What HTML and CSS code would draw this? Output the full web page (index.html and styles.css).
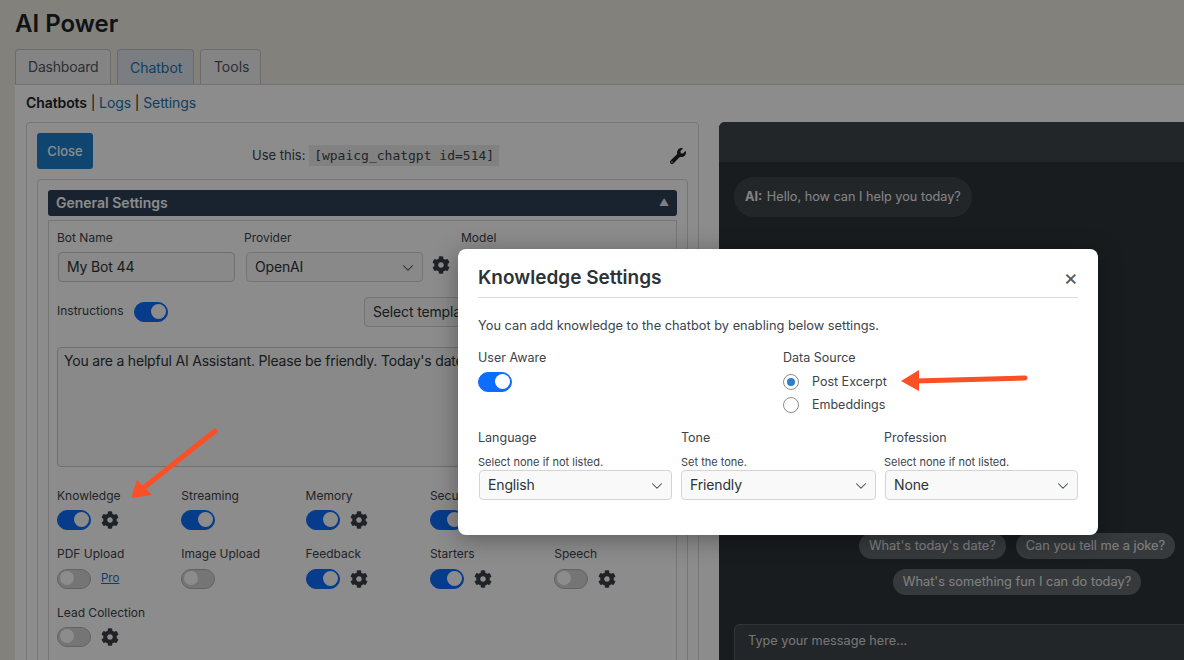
FILE: index.html
```html
<!DOCTYPE html>
<html lang="en">
<head>
<meta charset="utf-8">
<title>AI Power</title>
<link rel="stylesheet" href="styles.css">
</head>
<body>
<svg class="defs" width="0" height="0" aria-hidden="true">
  <symbol id="gear" viewBox="0 0 512 512"><path d="M487.4 315.7l-42.6-24.6c4.3-23.2 4.3-47 0-70.2l42.6-24.6c4.9-2.8 7.1-8.6 5.5-14-11.1-35.6-30-67.8-54.7-94.6-3.8-4.1-10-5.1-14.8-2.3L380.8 110c-17.9-15.4-38.5-27.3-60.8-35.1V25.8c0-5.6-3.9-10.5-9.4-11.7-36.7-8.2-74.3-7.8-109.2 0-5.5 1.2-9.4 6.1-9.4 11.7V75c-22.2 7.9-42.8 19.8-60.8 35.1L88.7 85.5c-4.9-2.8-11-1.9-14.8 2.3-24.7 26.7-43.6 58.9-54.7 94.6-1.7 5.4.6 11.2 5.5 14L67.3 221c-4.3 23.2-4.3 47 0 70.2l-42.6 24.6c-4.9 2.8-7.1 8.6-5.5 14 11.1 35.6 30 67.8 54.7 94.6 3.8 4.1 10 5.1 14.8 2.3l42.6-24.6c17.9 15.4 38.5 27.3 60.8 35.1v49.2c0 5.6 3.9 10.5 9.4 11.7 36.7 8.2 74.3 7.8 109.2 0 5.5-1.2 9.4-6.1 9.4-11.7v-49.2c22.2-7.9 42.8-19.8 60.8-35.1l42.6 24.6c4.9 2.8 11 1.9 14.8-2.3 24.7-26.7 43.6-58.9 54.7-94.6 1.5-5.5-.7-11.3-5.6-14.1zM256 336c-44.1 0-80-35.9-80-80s35.9-80 80-80 80 35.9 80 80-35.9 80-80 80z"/></symbol>
  <symbol id="chev" viewBox="0 0 16 16"><path d="M2 5l6 6 6-6" fill="none" stroke="currentColor" stroke-width="1.4" stroke-linecap="round" stroke-linejoin="round"/></symbol>
</svg>

<div class="page">
  <h1 class="title">AI Power</h1>
  <nav class="tabs">
    <a class="tab">Dashboard</a>
    <a class="tab tab-active">Chatbot</a>
    <a class="tab tab-tools">Tools</a>
  </nav>
  <div class="panel">
    <p class="subnav"><b>Chatbots</b> | <a class="link">Logs</a> | <a class="link">Settings</a></p>
    <div class="columns">
      <section class="card">
        <div class="card-top">
          <button class="btn-close">Close</button>
          <div class="use-this">Use this: <code class="shortcode">[wpaicg_chatgpt id=514]</code></div>
          <svg class="wrench" viewBox="0 0 512 512"><path d="M507.73 109.1c-2.24-9.03-13.54-12.09-20.12-5.51l-74.36 74.36-67.88-11.31-11.31-67.88 74.36-74.36c6.62-6.62 3.43-17.9-5.66-20.16-47.38-11.74-99.55.91-136.58 37.93-39.64 39.64-50.55 97.1-34.05 147.2L18.74 402.76c-24.99 24.99-24.99 65.51 0 90.5 24.99 24.99 65.51 24.99 90.5 0l213.21-213.21c50.12 16.71 107.47 5.68 147.37-34.22 37.07-37.07 49.7-89.32 37.91-136.73zM64 472c-13.25 0-24-10.75-24-24 0-13.26 10.75-24 24-24s24 10.74 24 24c0 13.25-10.75 24-24 24z"/></svg>
        </div>
        <div class="inner">
          <div class="section-bar"><span>General Settings</span><span class="caret">▲</span></div>
          <div class="section-body">
            <div class="row-main">
              <div class="field f-name"><label class="lbl">Bot Name</label><input class="control" value="My Bot 44"></div>
              <div class="field f-provider"><label class="lbl">Provider</label>
                <div class="with-gear"><div class="fake-select"><span>OpenAI</span><svg class="chev"><use href="#chev"/></svg></div><svg class="gear"><use href="#gear"/></svg></div>
              </div>
              <div class="field f-model"><label class="lbl">Model</label><div class="fake-select"></div></div>
            </div>
            <div class="row-instr">
              <span class="instr-label">Instructions</span>
              <span class="toggle on"></span>
              <div class="fake-select template"><span>Select template</span></div>
            </div>
            <div class="textarea">You are a helpful AI Assistant. Please be friendly. Today's date</div>
            <div class="opts">
              <div class="opt"><span class="opt-l">Knowledge</span><div class="opt-c"><span class="toggle on"></span><svg class="gear"><use href="#gear"/></svg></div></div>
              <div class="opt"><span class="opt-l">Streaming</span><div class="opt-c"><span class="toggle on"></span></div></div>
              <div class="opt"><span class="opt-l">Memory</span><div class="opt-c"><span class="toggle on"></span><svg class="gear"><use href="#gear"/></svg></div></div>
              <div class="opt"><span class="opt-l">Security</span><div class="opt-c"><span class="toggle on"></span><svg class="gear"><use href="#gear"/></svg></div></div>
              <div class="opt"></div>
              <div class="opt"><span class="opt-l">PDF Upload</span><div class="opt-c"><span class="toggle"></span><a class="pro">Pro</a></div></div>
              <div class="opt"><span class="opt-l">Image Upload</span><div class="opt-c"><span class="toggle"></span></div></div>
              <div class="opt"><span class="opt-l">Feedback</span><div class="opt-c"><span class="toggle on"></span><svg class="gear"><use href="#gear"/></svg></div></div>
              <div class="opt"><span class="opt-l">Starters</span><div class="opt-c"><span class="toggle on"></span><svg class="gear"><use href="#gear"/></svg></div></div>
              <div class="opt"><span class="opt-l">Speech</span><div class="opt-c"><span class="toggle"></span><svg class="gear"><use href="#gear"/></svg></div></div>
              <div class="opt"><span class="opt-l">Lead Collection</span><div class="opt-c"><span class="toggle"></span><svg class="gear"><use href="#gear"/></svg></div></div>
            </div>
          </div>
        </div>
      </section>
      <section class="chat">
        <div class="chat-head"></div>
        <div class="chat-body">
          <div class="bubble"><b>AI:</b> Hello, how can I help you today?</div>
          <div class="chips">
            <span class="chip">What's today's date?</span>
            <span class="chip">Can you tell me a joke?</span>
            <span class="chip">What's something fun I can do today?</span>
          </div>
          <div class="chat-input">Type your message here...</div>
        </div>
      </section>
    </div>
  </div>
</div>

<div class="backdrop"></div>

<div class="modal">
  <header class="modal-head"><h2 class="modal-title">Knowledge Settings</h2><span class="modal-x">×</span></header>
  <p class="modal-intro">You can add knowledge to the chatbot by enabling below settings.</p>
  <div class="modal-row">
    <div class="aware">
      <div class="m-label">User Aware</div>
      <span class="toggle toggle-bright on"></span>
    </div>
    <div class="source">
      <div class="m-label">Data Source</div>
      <div class="radio-line radio-first"><span class="radio checked"></span>Post Excerpt</div>
      <div class="radio-line"><span class="radio"></span>Embeddings</div>
    </div>
  </div>
  <div class="modal-selects">
    <div class="m-field">
      <div class="m-label">Language</div>
      <div class="m-hint">Select none if not listed.</div>
      <div class="fake-select m-select"><span>English</span><svg class="chev"><use href="#chev"/></svg></div>
    </div>
    <div class="m-field">
      <div class="m-label">Tone</div>
      <div class="m-hint">Set the tone.</div>
      <div class="fake-select m-select"><span>Friendly</span><svg class="chev"><use href="#chev"/></svg></div>
    </div>
    <div class="m-field">
      <div class="m-label">Profession</div>
      <div class="m-hint">Select none if not listed.</div>
      <div class="fake-select m-select"><span>None</span><svg class="chev"><use href="#chev"/></svg></div>
    </div>
  </div>
</div>

<svg class="arrows" viewBox="0 0 1184 660" aria-hidden="true">
  <path class="arrow-shaft" d="M215 431L142 489"/>
  <path class="arrow-head" d="M131 498L137 480L152 495Z"/>
  <path class="arrow-shaft" d="M1025 378L915 381"/>
  <path class="arrow-head" d="M901 381L919 370L919 391Z"/>
</svg>
</body>
</html>
```

FILE: styles.css
```css
* { box-sizing: border-box; }
html, body { margin: 0; height: 660px; overflow: hidden; }
body {
  background: #eeece2;
  color: #1d2327;
  font: 13px/1.4 Inter, "Noto Sans", "Liberation Sans", sans-serif;
  position: relative;
}
.defs { position: absolute; }
.page { width: 1340px; padding: 0 0 0 15px; }
.title { margin: 0; padding-top: 9px; height: 49px; font-size: 24px; line-height: 29px; font-weight: 600; color: #1d2327; }

.tabs { display: flex; gap: 6px; height: 35px; }
.tab {
  height: 35px; padding: 0 11.5px 0 12px; display: flex; align-items: center;
  font-size: 14px; letter-spacing: -0.2px; color: #50575e; background: #f0f0f1;
  border: 1px solid #c3c4c7; border-bottom: 0; border-radius: 4px 4px 0 0;
}
.tab-active { width: 77px; letter-spacing: 0; background: #dfe5ee; color: #2271b1; padding-top: 2px; }
.tab-tools { width: 61px; padding-left: 13px; letter-spacing: 0; }

.panel { background: #fff; border-top: 1px solid #d4d4d4; padding: 0 11px; height: 640px; }
.subnav { margin: 0; height: 37px; padding-top: 9px; font-size: 14px; line-height: 18px; letter-spacing: -0.1px; color: #1d2327; }
.subnav b { font-weight: 600; }
.link { color: #2271b1; }

.columns { display: grid; grid-template-columns: 673px 596px; gap: 20px; }
.card { height: 600px; background: #fff; border: 1px solid #d8d8d8; border-radius: 4px; padding: 10px; }
.card-top { display: flex; align-items: center; height: 36px; position: relative; }
.btn-close {
  width: 56px; height: 36px; padding: 0; background: #1d7ec9; color: #fff;
  font: 500 13px Inter, sans-serif; border: 0; border-radius: 3px;
}
.use-this { margin-left: 159px; margin-top: 8px; font-size: 13px; color: #3c434a; }
.shortcode {
  display: inline-block; margin-left: 0; padding: 0 5px; height: 21px;
  background: #ebebeb; color: #3c434a; font: 13px/21px "DejaVu Sans Mono", monospace;
}
.wrench { position: absolute; right: 2px; top: 15px; width: 16px; height: 16px; fill: #1d2327; }

.inner { margin-top: 10px; height: 560px; border: 1px solid #d8d8d8; border-radius: 4px; padding: 10px; }
.section-bar {
  height: 26px; padding: 0 8px; display: flex; align-items: center; justify-content: space-between;
  background: #2c4057; color: #fff; font-size: 14px; font-weight: 600; border-radius: 3px;
}
.caret { font-size: 10px; font-weight: 400; margin: -2px 0 0 0; color: #e4ecf2; }
.section-body { margin-top: 4px; height: 520px; border: 1px solid #d8d8d8; padding: 9px 8px; }

.row-main { display: flex; gap: 11px; }
.field { display: flex; flex-direction: column; }
.f-name { width: 177px; }
.f-provider { width: 216px; margin-left: -1px; }
.f-model { width: 200px; margin-left: -10px; }
.lbl { font-size: 12px; line-height: 15px; height: 22px; color: #3c434a; }
.control {
  width: 177px; height: 30px; margin-left: 1px; padding: 0 8px 1px; font: 14px Inter, sans-serif; letter-spacing: -0.15px; color: #2c3338;
  background: #f9f9f9; border: 1px solid #ccc; border-radius: 4px;
}
.with-gear { display: flex; align-items: center; gap: 9px; }
.with-gear .fake-select { width: 177px; margin-left: 2px; }
.with-gear .gear { margin-top: -4px; }
.fake-select {
  position: relative; height: 30px; padding: 0 8px 1px; display: flex; align-items: center;
  font-size: 14px; letter-spacing: -0.15px; color: #2c3338; background: #f9f9f9; border: 1px solid #d4d4d4; border-radius: 4px;
}
.chev { position: absolute; right: 8px; top: 9px; width: 12px; height: 12px; color: #3c434a; }
.gear { width: 18px; height: 18px; fill: #3a3f45; flex: none; }

.row-instr { position: relative; display: flex; align-items: center; gap: 10px; height: 30px; margin-top: 15px; }
.instr-label { font-size: 12px; color: #3c434a; margin-top: -1px; }
.template { position: absolute; left: 307px; top: 0; width: 260px; }

.textarea {
  margin-top: 20px; height: 120px; width: 600px; padding: 3px 6px; font-size: 14px; line-height: 20px; letter-spacing: -0.2px;
  color: #2c3338; background: #f9f9f9; border: 1px solid #ccc; border-radius: 4px;
}
.opts { display: grid; grid-template-columns: repeat(5, 124.3px); margin-top: 20px; }
.opt { height: 58.4px; display: flex; flex-direction: column; }
.opt-l { font-size: 12px; line-height: 17px; color: #3c434a; }
.opt-c { display: flex; align-items: center; gap: 10px; margin-top: 6.2px; height: 20px; }

.toggle {
  display: inline-block; position: relative; width: 34px; height: 20px; flex: none;
  border-radius: 10px; background: #d6d6d6; border: 1.5px solid #b4b4b4;
}
.toggle::after {
  content: ""; position: absolute; left: 1.5px; top: 1.5px; width: 14px; height: 14px;
  border-radius: 50%; background: #fff;
}
.toggle.on { background: #0d6efd; border-color: #0d6efd; }
.toggle.on::after { left: auto; right: 1px; top: 1px; width: 15px; height: 15px; }
.pro { font-size: 11.5px; color: #2271b1; text-decoration: underline; margin-top: -2px; }

.chat { height: 600px; background: #2f333a; border-radius: 6px 0 0 0; color: #fff; }
.chat-head { height: 40px; background: #41464c; border-radius: 6px 0 0 0; }
.chat-body { position: relative; height: 560px; padding: 15px; }
.bubble {
  display: inline-block; height: 40px; padding: 0 11px; line-height: 39px;
  background: #41464c; border-radius: 20px; font-size: 12.7px; color: #f0f0f0;
}
.bubble b { font-weight: 700; margin-right: 1px; }
.chips {
  position: absolute; left: 0; right: 0; top: 370px;
  display: flex; flex-wrap: wrap; justify-content: center; gap: 10px;
  padding: 1px 100px 0;
}
.chip {
  height: 26px; padding: 0 10px; line-height: 26px; font-size: 12.8px;
  background: #636a70; color: #eaeaea; border-radius: 13px;
}
.chat-input {
  position: absolute; left: 15px; right: 15px; top: 462px; height: 80px; padding: 7px 13px;
  background: #41464c; border: 1px solid #5a5f65; border-radius: 6px;
  font-size: 12.7px; line-height: 18px; color: #d8d8d8;
}

.backdrop { position: absolute; inset: 0; background: rgba(0, 0, 0, .45); }

.modal {
  position: absolute; left: 458px; top: 249px; width: 640px; height: 286px;
  padding: 20px 20px 0; background: #fff; border-radius: 8px; color: #3c434a;
  box-shadow: 0 4px 24px rgba(0, 0, 0, .35);
}
.modal-head { position: relative; height: 29px; border-bottom: 1px solid #dcdcde; }
.modal-title { margin: 0; font-size: 19px; line-height: 18px; font-weight: 600; color: #2c3338; }
.modal-x { position: absolute; right: 0; top: -2px; font-size: 22px; line-height: 20px; font-weight: 400; color: #50575e; }
.modal-intro { margin: 19px 0 0; font-size: 12.8px; line-height: 18px; color: #3c434a; }
.modal-row { display: flex; margin-top: 14px; height: 71px; }
.aware { width: 305px; }
.m-label { font-size: 12.5px; line-height: 17px; color: #3c434a; }
.toggle-bright { margin-top: 6px; }
.radio-line { display: flex; align-items: center; gap: 13px; height: 23px; font-size: 12.5px; color: #3c434a; }
.radio-first { margin-top: 4px; }
.radio {
  position: relative; width: 16px; height: 16px; border: 1px solid #8c8f94; border-radius: 50%; background: #fff;
}
.radio.checked::after {
  content: ""; position: absolute; left: 3px; top: 3px; width: 8px; height: 8px; border-radius: 50%; background: #2c7fc9;
}
.modal-selects { display: grid; grid-template-columns: 195px 195px 194px; gap: 8px; margin-top: 9px; }
.m-hint { margin-top: 9px; font-size: 11px; line-height: 14px; color: #3c434a; }
.m-select { margin: 1px 0 0 1px; }
.m-field:nth-child(1) .m-select { width: 193px; }
.m-field:nth-child(2) .m-select { width: 195px; margin-left: 0; }
.m-field:nth-child(3) .m-select { width: 193px; }

.arrows { position: absolute; left: 0; top: 0; width: 1184px; height: 660px; pointer-events: none; }
.arrow-shaft { fill: none; stroke: #fb4f26; stroke-width: 5; stroke-linecap: round; }
.arrow-head { fill: #fb4f26; }
```
